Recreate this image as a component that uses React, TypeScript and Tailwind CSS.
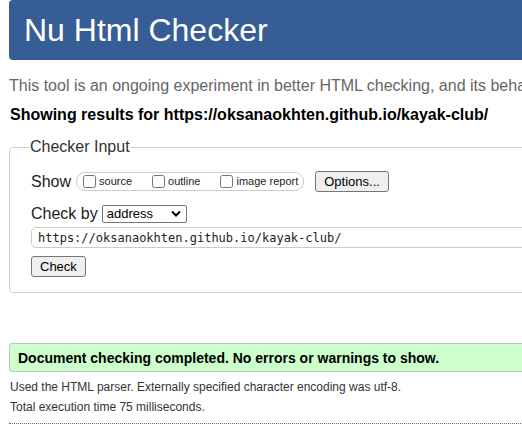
import React from "react";

// checkbox with a small label next to it
function Opt({ label, first }: { label: string; first?: boolean }) {
  return (
    <label className={`flex items-center gap-[3px] ${first ? "" : "ml-[20px]"}`}>
      <input type="checkbox" className="w-[13px] h-[13px] m-0" />
      <span className="text-[11px] leading-[13px] text-[#222]">{label}</span>
    </label>
  );
}

export default function App() {
  return (
    <div
      className="w-[522px] h-[426px] overflow-hidden bg-white text-[#222]"
      style={{ fontFamily: '"Liberation Sans", Arial, sans-serif' }}
    >
      <div className="w-[900px] pl-[9px]">
        <div className="h-[60px] bg-[#365d95] rounded-[4px] pl-[15px] flex items-center">
          <h1 className="text-[32px] leading-[36px] text-white">Nu Html Checker</h1>
        </div>

        <p className="mt-[16px] text-[16px] leading-[20px] text-[#666] whitespace-nowrap">
          This tool is an ongoing experiment in better HTML checking, and its behavior remains subject to change
        </p>
        <p className="mt-[9px] text-[16px] leading-[20px] font-bold text-black whitespace-nowrap pl-[1px]">
          Showing results for https://oksanaokhten.github.io/kayak-club/
        </p>

        <fieldset className="mt-[13px] w-[700px] border border-[#ccc] rounded-[4px] pl-[21px] pb-[14px]">
          <legend className="text-[16px] leading-[18px] text-[#333] px-[1px] -ml-[2px]">Checker Input</legend>

          <div className="mt-[15px] h-[21px] flex items-center">
            <span className="text-[16px] leading-[20px]">Show</span>
            <div className="ml-[5px] h-[19px] flex items-center border border-[#ccc] rounded-[9px] pl-[6px] pr-[5px]">
              <Opt label="source" first />
              <Opt label="outline" />
              <Opt label="image report" />
            </div>
            <button className="ml-[11px] h-[21px] px-[8px] text-[13px] text-black bg-[#efefef] border border-[#767676] rounded-[3px]">
              Options...
            </button>
          </div>

          <div className="mt-[12px] h-[19px] flex items-center">
            <span className="text-[16px] leading-[20px]">Check by</span>
            <div className="ml-[4px] w-[85px] h-[18px] flex items-center justify-between border border-[#767676] rounded-[2px] pl-[4px] pr-[5px] bg-white">
              <span className="text-[13px] leading-[16px] text-black">address</span>
              <svg width="10" height="7" viewBox="0 0 10 7">
                <path d="M1 1.5 L5 5.5 L9 1.5" fill="none" stroke="#000" strokeWidth="2" />
              </svg>
            </div>
          </div>

          <div className="mt-[4px] w-[620px] h-[21px] flex items-center border border-[#ccc] rounded-[5px] pl-[6px]">
            <span
              className="text-[12px] leading-[14px] text-[#222]"
              style={{ fontFamily: '"DejaVu Sans Mono", "Liberation Mono", monospace' }}
            >
              https://oksanaokhten.github.io/kayak-club/
            </span>
          </div>

          <button className="mt-[8px] h-[21px] px-[8px] text-[13px] text-black bg-[#efefef] border border-[#767676] rounded-[3px]">
            Check
          </button>
        </fieldset>

        <div className="mt-[50px] w-[700px] h-[29px] flex items-center bg-[#ccffcc] border border-[#c0c0c0] rounded-[3px] pl-[8px]">
          <span className="text-[14px] leading-[18px] font-bold text-black">
            Document checking completed. No errors or warnings to show.
          </span>
        </div>

        <p className="mt-[5px] text-[12px] leading-[20px] text-[#333] pl-[1px]">
          Used the HTML parser. Externally specified character encoding was utf-8.
        </p>
        <p className="text-[12px] leading-[20px] text-[#333] pl-[1px]">Total execution time 75 milliseconds.</p>

        <div className="mt-[6px] w-[700px] border-t border-dotted border-[#666]" />
      </div>
    </div>
  );
}
